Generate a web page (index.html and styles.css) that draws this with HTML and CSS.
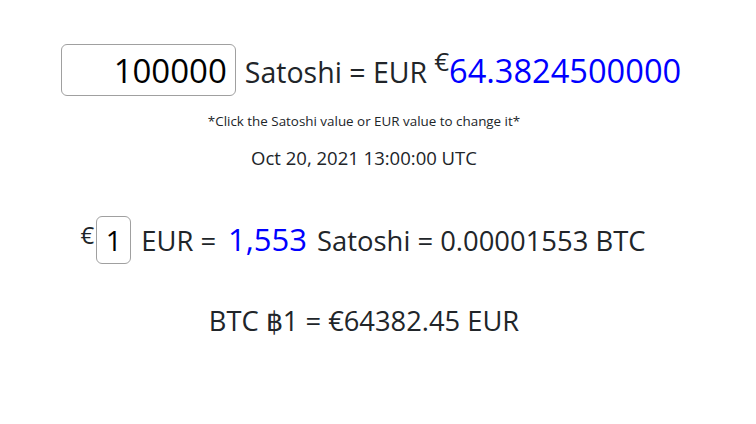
FILE: index.html
```html
<!DOCTYPE html>
<html>
<head>
<meta charset="utf-8">
<link rel="stylesheet" href="styles.css">
</head>
<body>
<main class="page">
  <div class="row row-main">
    <span class="box box-sat">100000</span>
    <span class="txt">Satoshi = EUR</span>
    <span class="sup">€</span><span class="blue big">64.3824500000</span>
  </div>
  <p class="hint">*Click the Satoshi value or EUR value to change it*</p>
  <p class="date">Oct 20, 2021 13:00:00 UTC</p>
  <div class="row row-eur">
    <span class="sup sup2">€</span><span class="box box-eur">1</span>
    <span class="txt txt2">EUR =</span>
    <span class="blue mid">1,553</span>
    <span class="txt txt2">Satoshi = 0.00001553 BTC</span>
  </div>
  <p class="btc">BTC ฿1 = €64382.45 EUR</p>
</main>
</body>
</html>
```
FILE: styles.css
```css
html, body {
  margin: 0;
  padding: 0;
  background: #fff;
}
body {
  font-family: "Open Sans", "Noto Sans", sans-serif;
  color: #212529;
}
.page {
  display: flex;
  flex-direction: column;
  align-items: center;
  padding: 44px 28px 0 0;
}
.row {
  display: flex;
  align-items: baseline;
  white-space: nowrap;
}
.row-main {
  margin-left: 14px;
  height: 52px;
}
.box {
  display: inline-block;
  border: 1px solid #a0a0a0;
  border-radius: 6px;
  color: #000;
  box-sizing: border-box;
}
.box-sat {
  width: 175px;
  height: 52px;
  font-size: 33px;
  line-height: 50px;
  padding: 1px 8px 0 0;
  text-align: right;
  margin-right: 9px;
}
.txt {
  font-size: 28.5px;
}
.sup {
  font-size: 26px;
  align-self: flex-start;
  margin-left: 7px;
  margin-top: 2px;
  line-height: 30px;
}
.blue {
  color: #0000ff;
}
.big {
  font-size: 32.6px;
}
.hint {
  margin: 17px 0 0;
  font-size: 13.4px;
  line-height: 16px;
}
.date {
  margin: 18px 0 0;
  font-size: 18.5px;
  line-height: 22px;
}
.row-eur {
  margin-top: 47px;
  margin-left: -2px;
}
.txt2 {
  font-size: 27.4px;
}
.sup2 {
  margin: 4px 2px 0 0;
  font-size: 24px;
}
.box-eur {
  width: 35px;
  height: 48px;
  font-size: 28px;
  line-height: 46px;
  text-align: center;
  margin-right: 10px;
}
.mid {
  font-size: 31px;
  margin: 0 10px 0 12px;
}
.btc {
  margin: 40px 0 0;
  font-size: 27.3px;
  line-height: 34px;
}
```
